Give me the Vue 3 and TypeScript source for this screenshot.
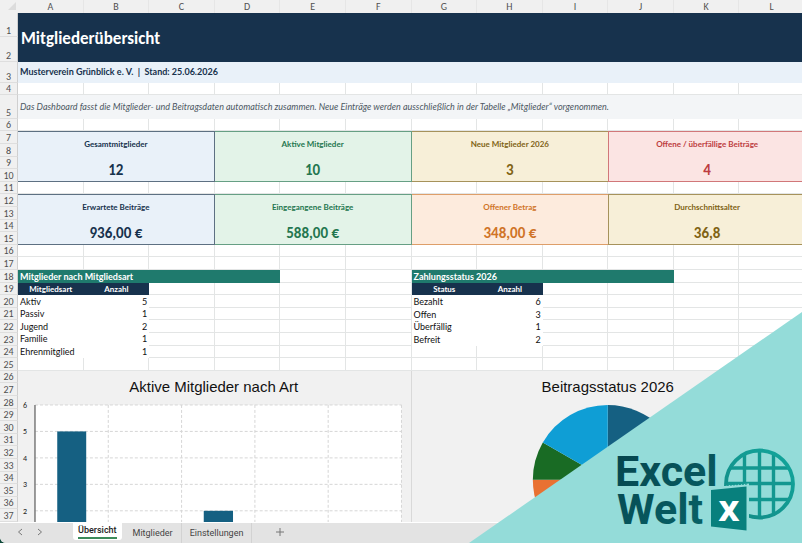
<script setup lang="ts">
interface Kpi { label: string; value: string; tone: string; row: number; col: number; edge: string }
interface Entry { name: string; count: number }

const columns = 'ABCDEFGHIJKL'.split('')
const rows = Array.from({ length: 37 }, (_, i) => i + 1)

const kpis: Kpi[] = [
  { label: 'Gesamtmitglieder', value: '12', tone: 'navy', row: 8, col: 2, edge: 'right' },
  { label: 'Aktive Mitglieder', value: '10', tone: 'green', row: 8, col: 5, edge: 'right' },
  { label: 'Neue Mitglieder 2026', value: '3', tone: 'gold', row: 8, col: 8, edge: 'none' },
  { label: 'Offene / überfällige Beiträge', value: '4', tone: 'red', row: 8, col: 11, edge: 'left' },
  { label: 'Erwartete Beiträge', value: '936,00 €', tone: 'navy', row: 13, col: 2, edge: 'right' },
  { label: 'Eingegangene Beiträge', value: '588,00 €', tone: 'green', row: 13, col: 5, edge: 'right' },
  { label: 'Offener Betrag', value: '348,00 €', tone: 'orange', row: 13, col: 8, edge: 'none' },
  { label: 'Durchschnittsalter', value: '36,8', tone: 'gold', row: 13, col: 11, edge: 'left' },
]

const kinds: Entry[] = [
  { name: 'Aktiv', count: 5 },
  { name: 'Passiv', count: 1 },
  { name: 'Jugend', count: 2 },
  { name: 'Familie', count: 1 },
  { name: 'Ehrenmitglied', count: 1 },
]

const payments: Entry[] = [
  { name: 'Bezahlt', count: 6 },
  { name: 'Offen', count: 3 },
  { name: 'Überfällig', count: 1 },
  { name: 'Befreit', count: 2 },
]

const ticks = [6, 5, 4, 3, 2]
const step = 26.5
const tickY = (t: number) => 34 + (6 - t) * step
</script>

<template>
  <div class="app">
    <main class="sheet">
      <div class="corner"><svg width="8" height="8" viewBox="0 0 8 8"><path d="M8 0V8H0Z" fill="#dcdcdc" /></svg></div>
      <div v-for="(c, i) in columns" :key="c" class="col-head" :style="{ gridColumn: i + 2 }">{{ c }}</div>
      <div v-for="r in rows" :key="'n' + r" class="row-head" :style="{ gridRow: r + 1 }">{{ r }}</div>
      <div v-for="(c, i) in columns" :key="'c' + c" class="col-line" :style="{ gridColumn: i + 2 }"></div>
      <div v-for="r in rows" :key="'r' + r" class="row-line" :style="{ gridRow: r + 1 }"></div>

      <h1 class="title">Mitgliederübersicht</h1>
      <p class="subtitle">Musterverein Grünblick e. V.&nbsp; |&nbsp; Stand: 25.06.2026</p>
      <p class="note">Das Dashboard fasst die Mitglieder- und Beitragsdaten automatisch zusammen. Neue Einträge werden ausschließlich in der Tabelle „Mitglieder“ vorgenommen.</p>

      <section
        v-for="k in kpis"
        :key="k.label"
        class="kpi"
        :class="[k.tone, 'edge-' + k.edge]"
        :style="{ gridRow: k.row + ' / span 4', gridColumn: k.col + ' / span 3' }"
      >
        <h2>{{ k.label }}</h2>
        <strong>{{ k.value }}</strong>
      </section>

      <h2 class="band band-left">Mitglieder nach Mitgliedsart</h2>
      <table class="list list-left">
        <thead><tr><th>Mitgliedsart</th><th>Anzahl</th></tr></thead>
        <tbody><tr v-for="e in kinds" :key="e.name"><td>{{ e.name }}</td><td class="num">{{ e.count }}</td></tr></tbody>
      </table>

      <h2 class="band band-right">Zahlungsstatus 2026</h2>
      <table class="list list-right">
        <thead><tr><th>Status</th><th>Anzahl</th></tr></thead>
        <tbody><tr v-for="e in payments" :key="e.name"><td>{{ e.name }}</td><td class="num">{{ e.count }}</td></tr></tbody>
      </table>

      <figure class="chart chart-left">
        <svg viewBox="0 0 393 151" preserveAspectRatio="xMinYMin meet">
          <rect x="17" y="34" width="367" height="120" fill="#fff" />
          <g stroke="#d6d6d6" stroke-width="1" stroke-dasharray="3 2">
            <path v-for="t in ticks" :key="t" :d="`M17 ${tickY(t)}H384`" />
            <path v-for="n in 5" :key="n" :d="`M${17 + n * 73.4} 34V154`" />
          </g>
          <rect x="39.3" y="60.5" width="29" height="94" fill="#156082" />
          <rect x="186" y="140" width="29.3" height="14" fill="#156082" />
          <path d="M17 34V154" stroke="#7a7a7a" stroke-width="1.5" />
          <text v-for="t in ticks" :key="'l' + t" class="tick" x="9" :y="tickY(t) + 3" text-anchor="end">{{ t }}</text>
          <text class="chart-title" x="196" y="21" text-anchor="middle">Aktive Mitglieder nach Art</text>
        </svg>
      </figure>
      <figure class="chart chart-right">
        <svg viewBox="0 0 393 151" preserveAspectRatio="xMinYMin meet">
          <path d="M196 109V34A75 75 0 0 1 196 184Z" fill="#156082" />
          <path d="M196 109V184A75 75 0 0 1 121 109Z" fill="#e97132" />
          <path d="M196 109H121A75 75 0 0 1 131 71.5Z" fill="#196b24" />
          <path d="M196 109L131 71.5A75 75 0 0 1 196 34Z" fill="#0f9ed5" />
          <text class="chart-title" x="196" y="21" text-anchor="middle">Beitragsstatus 2026</text>
        </svg>
      </figure>
    </main>

    <nav class="tabs">
      <button class="arrow" type="button" aria-label="Zurück"><svg width="6" height="8" viewBox="0 0 6 8"><path d="M5 1L1.5 4L5 7" /></svg></button>
      <button class="arrow" type="button" aria-label="Weiter"><svg width="6" height="8" viewBox="0 0 6 8"><path d="M1 1L4.5 4L1 7" /></svg></button>
      <button class="tab active" type="button"><span>Übersicht</span></button>
      <button class="tab" type="button">Mitglieder</button>
      <button class="tab" type="button">Einstellungen</button>
      <button class="add" type="button" aria-label="Neues Blatt"><svg width="8" height="8" viewBox="0 0 8 8"><path d="M4 0V8M0 4H8" /></svg></button>
    </nav>

    <svg class="brand" width="333" height="231" viewBox="0 0 333 231">
      <defs>
        <linearGradient id="ink" x1="0" y1="0" x2="1" y2="1"><stop offset="0" stop-color="#05434c" /><stop offset="1" stop-color="#08666a" /></linearGradient>
        <linearGradient id="globe" x1="0" y1="1" x2="1" y2="0"><stop offset="0" stop-color="#128a85" /><stop offset="1" stop-color="#12a69c" /></linearGradient>
        <clipPath id="disc"><circle cx="290.5" cy="172" r="33.5" /></clipPath>
      </defs>
      <path d="M333 0V231H0Z" fill="#94dcd9" />
      <g fill="none" stroke="#129790" stroke-width="3.4" clip-path="url(#disc)">
        <path d="M275.5 138V206M290.5 138V206M304.5 138V206M256 156H324M256 171.5H324M256 187.5H324" />
      </g>
      <circle cx="290.5" cy="172" r="33.5" fill="none" stroke="url(#globe)" stroke-width="3.8" />
      <path d="M239 175.5L280 171.5V221L239 216Z" fill="#94dcd9" />
      <path d="M255 173.5L279 172" stroke="#129790" stroke-width="1" stroke-dasharray="2 1" />
      <path d="M242 178L277.5 174.5V218.5L242 214.5Z" fill="#08807d" />
      <text class="brand-x" x="260" y="209" text-anchor="middle">X</text>
      <text class="brand-text"><tspan x="146" y="174">Excel</tspan><tspan x="148" y="212">Welt</tspan></text>
    </svg>
  </div>
</template>

<style>
body { margin: 0; background: #0f4a3a; }
</style>

<style scoped>
.app {
  position: relative;
  display: flex;
  flex-direction: column;
  min-height: 100vh;
  overflow: hidden;
  border-bottom-left-radius: 6px;
  background: #fff;
  font-family: Carlito, Lato, "Liberation Sans", sans-serif;
  color: #111;
}
h1, h2, p, figure { margin: 0; }
.sheet {
  flex: 1;
  display: grid;
  width: calc(100% + 3px);
  grid-template-columns: 18px repeat(12, minmax(0, 1fr));
  grid-template-rows: 13px 24px 25px 21px 12px 24px 12px repeat(6, 13px 13px 12px 13px 12px) 13px;
}
.corner, .col-head, .row-head { background: #f0f0f0; color: #505050; font-size: 10px; text-align: center; }
.corner { grid-area: 1 / 1; padding: 2px 2px 0 0; line-height: 0; text-align: right; }
.col-head { grid-row: 1; border-right: 1px solid #e6e6e6; line-height: 13px; }
.row-head {
  grid-column: 1;
  display: flex;
  align-items: flex-end;
  justify-content: center;
  border-right: 1px solid #cfcfcf;
  border-bottom: 1px solid #dedede;
  line-height: 10px;
  overflow: hidden;
}
.col-line { grid-row: 2 / -1; border-right: 1px solid #e3e5e5; }
.row-line { grid-column: 2 / -1; border-bottom: 1px solid #e3e5e5; }
.title {
  grid-area: 2 / 2 / 4 / -1;
  display: flex;
  align-items: center;
  padding: 2px 0 0 3px;
  background: #17324d;
  color: #fff;
  font-size: 17px;
  line-height: 20px;
}
.subtitle, .note, .band, .list { font-family: Lato, Carlito, sans-serif; font-size: 9px; }
.subtitle {
  grid-area: 4 / 2 / 5 / -1;
  padding-left: 2px;
  background: #e9f1f9;
  color: #17324d;
  font-weight: 700;
  line-height: 20px;
}
.note {
  grid-area: 6 / 2 / 7 / -1;
  padding-left: 2px;
  background: #f3f5f7;
  color: #4d5863;
  font-style: italic;
  line-height: 24px;
  white-space: nowrap;
}
.kpi {
  display: grid;
  grid-template-rows: 1fr 1fr;
  align-items: center;
  justify-items: center;
  border: 0 solid color-mix(in srgb, currentColor 70%, #fff);
  border-width: 1px 0;
}
.kpi h2 { font-family: Lato, Carlito, sans-serif; font-size: 8px; line-height: 12px; }
.kpi strong { padding-top: 2px; font-size: 15px; line-height: 18px; }
.edge-right { border-right-width: 1px; }
.edge-left { border-left-width: 1px; }
.navy { background: #e9f1f9; color: #17324d; }
.green { background: #e3f3e8; color: #24764f; }
.gold { background: #f7efd8; color: #806314; }
.red { background: #fbe4e3; color: #bd3c40; }
.orange { background: #fdebdd; color: #d07428; }
.band {
  padding-left: 2px;
  background: #1f7a6d;
  color: #fff;
  line-height: 13px;
}
.band-left { grid-area: 19 / 2 / 20 / 6; }
.band-right { grid-area: 19 / 8 / 20 / 12; }
.list {
  width: 100%;
  height: 100%;
  table-layout: fixed;
  border-collapse: collapse;
  background: #fff;
  line-height: 12px;
}
.list-left { grid-area: 20 / 2 / 26 / 4; }
.list-right { grid-area: 20 / 8 / 25 / 10; }
.list th { padding: 0; background: #17324d; color: #fff; font-size: 8px; }
.list td { padding: 0 2px; vertical-align: bottom; }
.list .num { text-align: right; }
.chart { overflow: hidden; background: #f1f1f1; border-right: 1px solid #d9d9d9; }
.chart svg { display: block; width: 100%; }
.chart-left { grid-area: 27 / 2 / -1 / 8; }
.chart-right { grid-area: 27 / 8 / -1 / -1; }
.chart-title { font: 15px "Liberation Sans", sans-serif; fill: #111; }
.tick { font-size: 8px; fill: #222; }
.tabs {
  display: flex;
  align-items: stretch;
  height: 20px;
  padding-left: 12px;
  background: #e3e3e3;
}
.tabs button {
  padding: 0;
  border: 0;
  background: none;
  color: #444;
  font: 9px Roboto, "Open Sans", sans-serif;
}
.tabs svg { fill: none; stroke: #777; stroke-width: 1; }
.tabs .arrow { width: 16px; margin-right: 4px; }
.tabs .tab { padding: 0 8px; }
.tabs .tab + .tab { border-right: 1px solid #d2d2d2; }
.tabs .active {
  align-self: flex-start;
  margin: 0 3px 0 21px;
  padding: 0 5px;
  height: 17px;
  border-radius: 0 0 3px 3px;
  background: #fff;
  color: #222;
  font-weight: 500;
}
.active span { display: block; line-height: 13px; border-bottom: 2px solid #3b8a5a; }
.tabs .add { width: 16px; margin-left: 20px; }
.brand { position: absolute; right: 0; bottom: 0; }
.brand-text { font: 700 43px Roboto, sans-serif; fill: url(#ink); }
.brand-x { font: 800 29px "Open Sans", sans-serif; fill: #fff; }
</style>
